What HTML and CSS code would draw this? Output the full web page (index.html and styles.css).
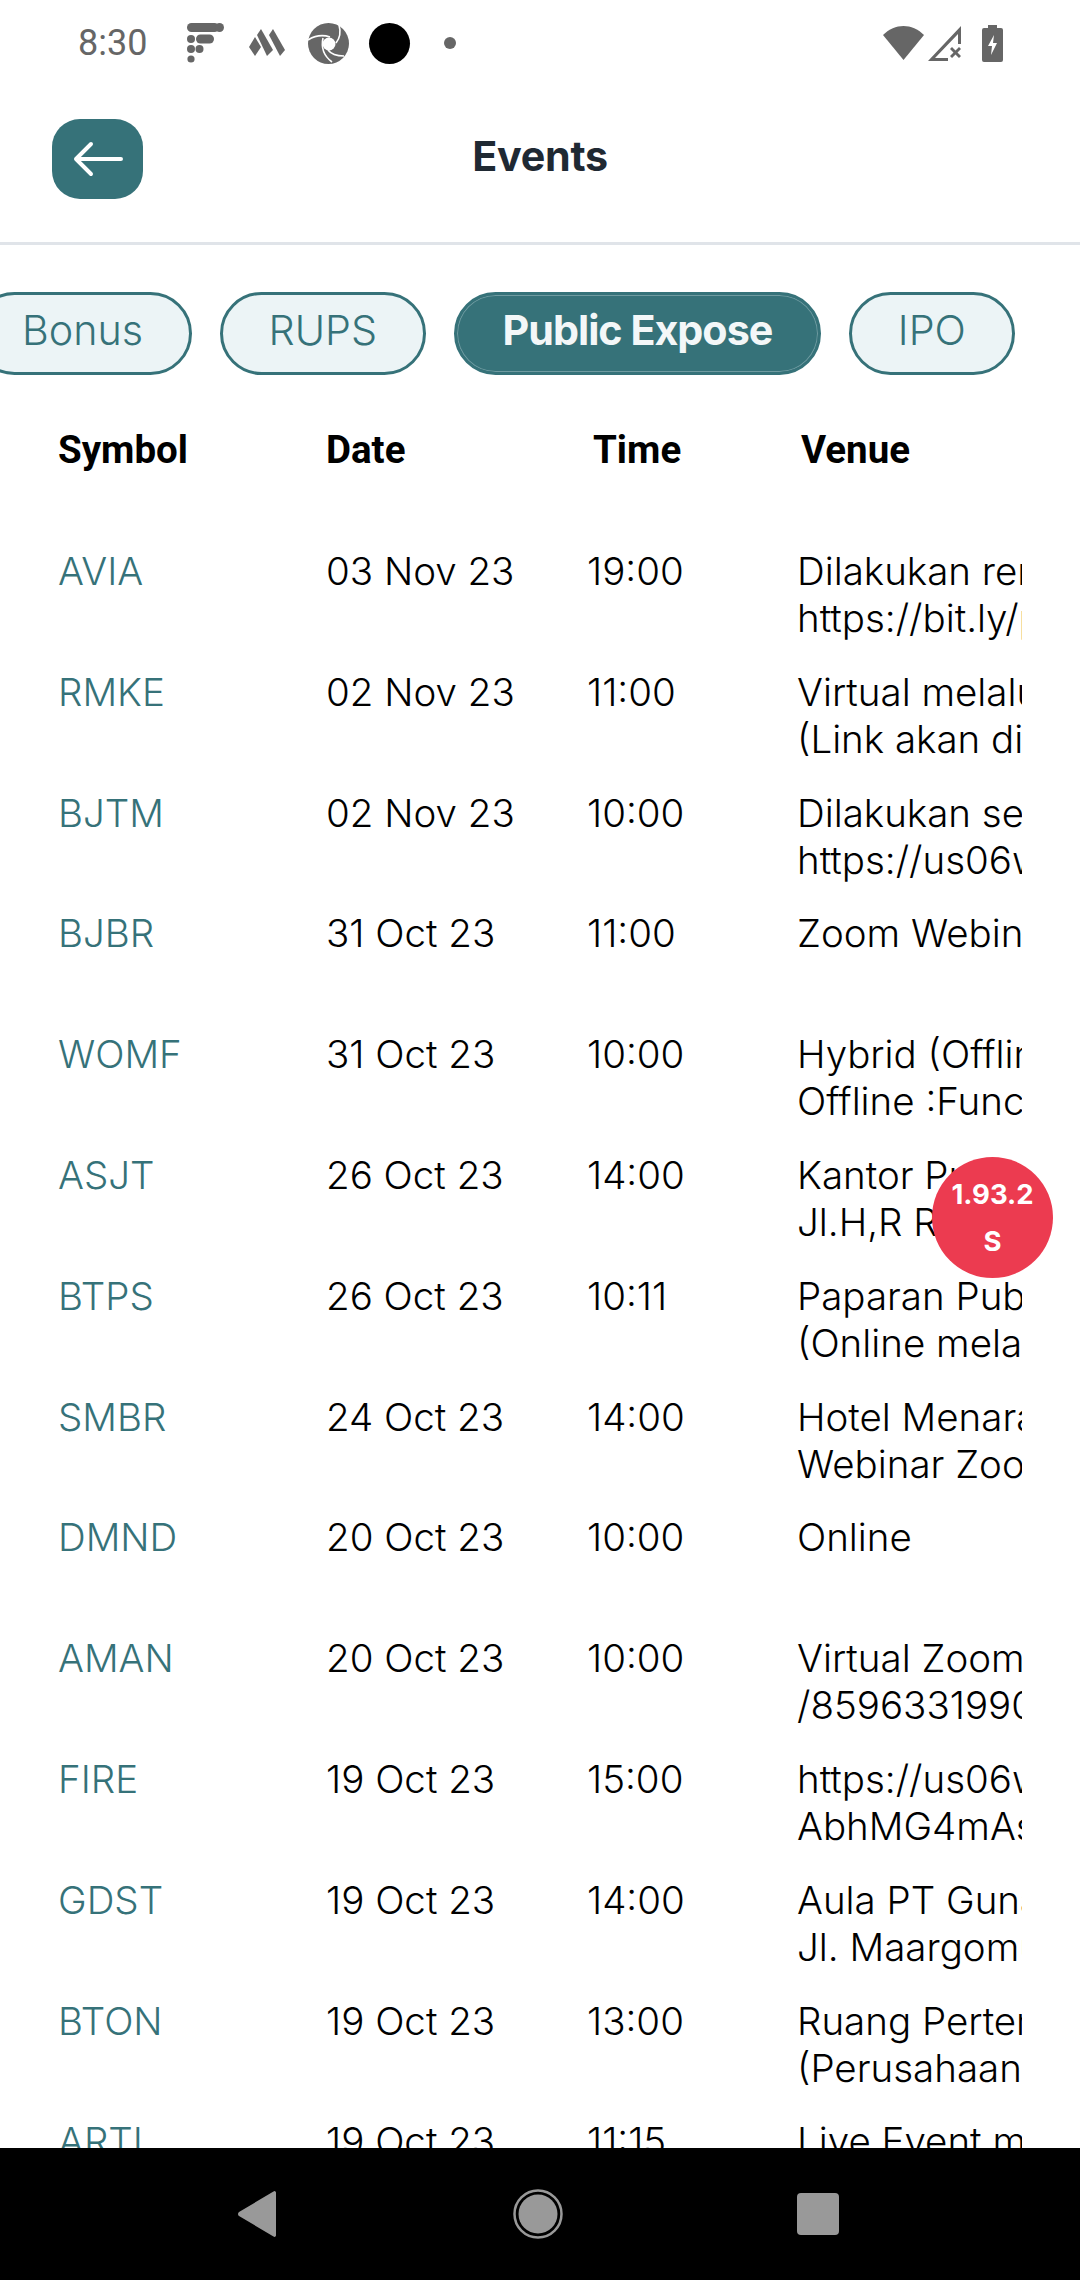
FILE: index.html
```html
<!DOCTYPE html>
<html lang="en">
<head>
<meta charset="utf-8">
<title>Events</title>
<link rel="stylesheet" href="styles.css">
</head>
<body>
<div class="screen">
  <div class="status">
    <span class="clock">8:30</span>
    <svg class="ic ic-f" width="38" height="40" viewBox="0 0 38 40"><rect x="0" y="0" width="32" height="9" rx="4.5"/><circle cx="32.5" cy="4.5" r="4.5"/><circle cx="4" cy="16" r="4"/><rect x="9" y="11.5" width="18" height="9" rx="4.5"/><circle cx="4" cy="26" r="4"/><circle cx="12.5" cy="26" r="4"/><circle cx="4" cy="36" r="3.6"/></svg>
    <svg class="ic ic-m" width="36" height="28" viewBox="0 0 36 28"><path d="M0 18L6 8L12 18L6 27Z"/><path d="M8 6L12 0L24 21L18 27Z"/><path d="M20 6L24 0L36 21L31 27Z"/></svg>
    <svg class="ic ic-s" width="41" height="41" viewBox="0 0 41 41"><circle cx="20.5" cy="20.5" r="20.5"/><g fill="none" stroke="#fff" stroke-width="1.6"><path d="M0 17C8 12 16 12 22 14"/><path d="M31 2C33 9 32 15 28 20"/><path d="M36 33C29 33 23 31 20 27"/><path d="M15 15C13 24 16 33 24 39"/></g><circle cx="21" cy="21" r="6.5" fill="#fff"/></svg>
    <span class="blackdot"></span>
    <span class="dot"></span>
    <span class="spacer"></span>
    <svg class="ic" width="41" height="34" viewBox="0 0 41 34"><path d="M0 9C12 -3 29 -3 41 9L20.5 34Z"/></svg>
    <svg class="ic ic-sig" width="34" height="35" viewBox="0 0 34 35"><path fill-rule="evenodd" d="M0 35L33 0V18H30V8L7 32H20V35Z"/><path d="M22 23l2-2 3.500 3.500 3.500-3.500 2 2-3.500 3.500 3.500 3.500-2 2-3.500-3.500-3.500 3.500-2-2 3.500-3.500Z"/></svg>
    <svg class="ic ic-bat" width="21" height="37" viewBox="0 0 21 37"><path fill-rule="evenodd" d="M6 0H15V3H19A2 2 0 0 1 21 5V35A2 2 0 0 1 19 37H2A2 2 0 0 1 0 35V5A2 2 0 0 1 2 3H6ZM12 10L6 21H10L9 30L15 18H11Z"/></svg>
  </div>

  <header class="topbar">
    <button class="back" aria-label="Back">
      <svg width="50" height="36" viewBox="0 0 50 36"><path d="M48 18H3M18 3L3 18L18 33" fill="none" stroke="#fff" stroke-width="4" stroke-linecap="round" stroke-linejoin="round"/></svg>
    </button>
    <h1 class="title">Events</h1>
  </header>

  <nav class="tabs">
    <span class="tab">Bonus</span>
    <span class="tab">RUPS</span>
    <span class="tab tab-on">Public Expose</span>
    <span class="tab">IPO</span>
  </nav>

  <div class="thead">
    <span>Symbol</span><span>Date</span><span>Time</span><span>Venue</span>
  </div>

  <main class="list">
    <div class="row"><a class="sym">AVIA</a><span>03 Nov 23</span><span>19:00</span><div class="venue"><p>Dilakukan remote</p><p>https://bit.ly/public</p></div></div>
    <div class="row"><a class="sym">RMKE</a><span>02 Nov 23</span><span>11:00</span><div class="venue"><p>Virtual melalui Zoom</p><p>(Link akan diberikan)</p></div></div>
    <div class="row"><a class="sym">BJTM</a><span>02 Nov 23</span><span>10:00</span><div class="venue"><p>Dilakukan secara</p><p>https://us06web</p></div></div>
    <div class="row"><a class="sym">BJBR</a><span>31 Oct 23</span><span>11:00</span><div class="venue"><p>Zoom Webinar</p></div></div>
    <div class="row"><a class="sym">WOMF</a><span>31 Oct 23</span><span>10:00</span><div class="venue"><p>Hybrid (Offline)</p><p>Offline :Function</p></div></div>
    <div class="row"><a class="sym">ASJT</a><span>26 Oct 23</span><span>14:00</span><div class="venue"><p>Kantor Pusat</p><p>Jl.H,R Rasuna</p></div></div>
    <div class="row"><a class="sym">BTPS</a><span>26 Oct 23</span><span>10:11</span><div class="venue"><p>Paparan Publik</p><p>(Online melalui)</p></div></div>
    <div class="row"><a class="sym">SMBR</a><span>24 Oct 23</span><span>14:00</span><div class="venue"><p>Hotel Menara</p><p>Webinar Zoom</p></div></div>
    <div class="row"><a class="sym">DMND</a><span>20 Oct 23</span><span>10:00</span><div class="venue"><p>Online</p></div></div>
    <div class="row"><a class="sym">AMAN</a><span>20 Oct 23</span><span>10:00</span><div class="venue"><p>Virtual Zoom</p><p>/85963319900</p></div></div>
    <div class="row"><a class="sym">FIRE</a><span>19 Oct 23</span><span>15:00</span><div class="venue"><p>https://us06web</p><p>AbhMG4mAs000</p></div></div>
    <div class="row"><a class="sym">GDST</a><span>19 Oct 23</span><span>14:00</span><div class="venue"><p>Aula PT Gunawan</p><p>Jl. Maargomulyo</p></div></div>
    <div class="row"><a class="sym">BTON</a><span>19 Oct 23</span><span>13:00</span><div class="venue"><p>Ruang Pertemuan</p><p>(Perusahaan)</p></div></div>
    <div class="row"><a class="sym">ARTI</a><span>19 Oct 23</span><span>11:15</span><div class="venue"><p>Live Event melalui</p></div></div>
  </main>

  <div class="badge"><span>1.93.2</span><span>S</span></div>

  <footer class="navbar">
    <svg width="40" height="46" viewBox="0 0 40 46"><path d="M38 1.500V44.500A1.500 1.500 0 0 1 35.500 45.500L1 25A2.500 2.500 0 0 1 1 21L35.500 .5A1.500 1.500 0 0 1 38 1.500Z" fill="#999"/></svg>
    <svg width="50" height="50" viewBox="0 0 50 50"><circle cx="25" cy="25" r="23.500" fill="none" stroke="#999" stroke-width="2.500"/><circle cx="25" cy="25" r="19.500" fill="#999"/></svg>
    <svg width="42" height="42" viewBox="0 0 42 42"><rect width="42" height="42" rx="4" fill="#999"/></svg>
  </footer>
</div>
</body>
</html>
```

FILE: styles.css
```css
* { box-sizing: border-box; }
html, body { margin: 0; padding: 0; background: #fff; }
.screen {
  position: relative;
  width: 1080px;
  height: 2280px;
  display: flex;
  flex-direction: column;
  overflow: hidden;
  font-family: Inter, "Liberation Sans", sans-serif;
  color: #000;
}
.status {
  height: 86px;
  flex: none;
  display: flex;
  align-items: center;
  padding: 0 77px 0 78px;
}
.clock {
  font-family: Roboto, sans-serif;
  font-size: 36px;
  color: #666;
  width: 109px;
  flex: none;
}
.ic { fill: #666; flex: none; }
.ic-m { margin-left: 24px; }
.ic-s { margin-left: 23px; }
.blackdot { width: 41px; height: 41px; border-radius: 50%; background: #000; margin-left: 20px; flex: none; }
.dot { width: 12px; height: 12px; border-radius: 50%; background: #666; margin-left: 34px; flex: none; }
.spacer { flex: 1; }
.ic-sig { margin-left: 4px; }
.ic-bat { margin-left: 20px; }

.topbar {
  flex: none;
  height: 159px;
  border-bottom: 3px solid #e0e4e9;
  display: flex;
  align-items: center;
  justify-content: center;
  position: relative;
  padding-bottom: 16px;
}
.back {
  position: absolute;
  left: 52px;
  top: 33px;
  width: 91px;
  height: 80px;
  border: 0;
  padding: 0;
  border-radius: 28px;
  background: #367279;
  display: flex;
  align-items: center;
  justify-content: center;
}
.title {
  margin: 0;
  font-size: 41.25px;
  font-weight: 700;
  color: #1f2933;
  letter-spacing: -0.3px;
}

.tabs {
  flex: none;
  display: flex;
  gap: 27.5px;
  margin: 47px 0 0 -27px;
  height: 83px;
}
.tab {
  flex: none;
  height: 83px;
  padding: 0 46px 8px;
  border: 3px solid #367279;
  border-radius: 42px;
  background: #ecf4f6;
  color: #367279;
  font-size: 41.25px;
  font-weight: 300;
  display: flex;
  align-items: center;
}
.tab-on {
  background: #367279;
  color: #f3f7f8;
  font-weight: 700;
  letter-spacing: -1px;
  box-shadow: inset 0 0 0 1px #6f9ba1;
}

.thead {
  flex: none;
  display: grid;
  grid-template-columns: 268px 267px 208px 1fr;
  padding-left: 58px;
  margin-top: 51px;
  font-family: Roboto, sans-serif;
  font-weight: 700;
  font-size: 38.5px;
  line-height: 47px;
}

.list {
  flex: 1;
  min-height: 0;
  overflow: hidden;
  padding-top: 75px;
}
.row {
  display: grid;
  grid-template-columns: 268px 261px 210px 225px;
  padding-left: 58px;
  height: 120.8px;
  font-size: 38.5px;
  line-height: 47px;
  font-weight: 300;
}
.sym { color: #367279; }
.venue { overflow: hidden; }
.venue p { margin: 0; white-space: nowrap; }

.badge {
  position: absolute;
  left: 932px;
  top: 1157px;
  width: 121px;
  height: 121px;
  border-radius: 50%;
  background: #ec3b50;
  color: #fff;
  font-weight: 700;
  font-size: 27.5px;
  line-height: 47px;
  display: flex;
  flex-direction: column;
  align-items: center;
  justify-content: center;
}

.navbar {
  flex: none;
  height: 132px;
  background: #000;
  display: flex;
  align-items: center;
  padding: 0 241px 0 238px;
  justify-content: space-between;
}
```
